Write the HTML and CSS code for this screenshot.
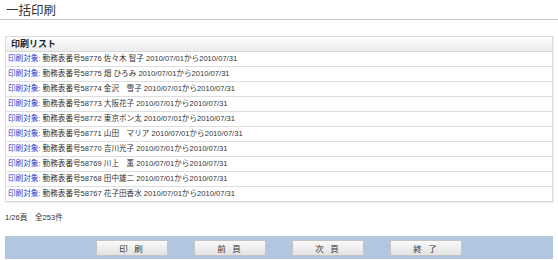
FILE: index.html
```html
<!DOCTYPE html>
<html lang="ja">
<head>
  <meta charset="utf-8">
  <title>一括印刷</title>
  <link rel="stylesheet" href="styles.css">
</head>
<body>
  <h1 class="title">一括印刷</h1>
  <div class="content">
    <div class="list">
      <div class="list-head">印刷リスト</div>
      <div class="row"><span class="label">印刷対象:</span> 勤務表番号58776 佐々木 智子 2010/07/01から2010/07/31</div>
      <div class="row"><span class="label">印刷対象:</span> 勤務表番号58775 畑 ひろみ 2010/07/01から2010/07/31</div>
      <div class="row"><span class="label">印刷対象:</span> 勤務表番号58774 金沢　雪子 2010/07/01から2010/07/31</div>
      <div class="row"><span class="label">印刷対象:</span> 勤務表番号58773 大阪花子 2010/07/01から2010/07/31</div>
      <div class="row"><span class="label">印刷対象:</span> 勤務表番号58772 東京ポン太 2010/07/01から2010/07/31</div>
      <div class="row"><span class="label">印刷対象:</span> 勤務表番号58771 山田　マリア 2010/07/01から2010/07/31</div>
      <div class="row"><span class="label">印刷対象:</span> 勤務表番号58770 吉川光子 2010/07/01から2010/07/31</div>
      <div class="row"><span class="label">印刷対象:</span> 勤務表番号58769 川上　薫 2010/07/01から2010/07/31</div>
      <div class="row"><span class="label">印刷対象:</span> 勤務表番号58768 田中雄二 2010/07/01から2010/07/31</div>
      <div class="row"><span class="label">印刷対象:</span> 勤務表番号58767 花子田香水 2010/07/01から2010/07/31</div>
    </div>
    <p class="pager">1/26頁　全253件</p>
    <div class="footer">
      <button class="btn">印 刷</button>
      <button class="btn">前 頁</button>
      <button class="btn">次 頁</button>
      <button class="btn">終 了</button>
    </div>
  </div>
</body>
</html>
```

FILE: styles.css
```css
html {
  font-family: "Liberation Sans", "Noto Sans CJK JP", sans-serif;
  color: #333;
}
body {
  margin: 0;
  background: #fff;
}
.title {
  margin: 0;
  padding: 3px 6px 0;
  height: 16px;
  font-size: 12.5px;
  font-weight: normal;
  line-height: 16px;
  color: #333;
  border-bottom: 1px solid #c8c8c8;
}
.content {
  padding: 16px 5px 0;
}
.list {
  border: 1px solid #dcdcdc;
  box-shadow: 1px 1px 1px #eee;
}
.list-head {
  height: 14px;
  line-height: 14px;
  padding-left: 5px;
  font-size: 9px;
  font-weight: bold;
  color: #222;
  background: linear-gradient(#fdfdfd, #ececec);
  border-bottom: 1px solid #d8d8d8;
}
.row {
  height: 14px;
  line-height: 14px;
  padding-left: 2px;
  font-size: 7.6px;
  color: #333;
  white-space: nowrap;
  border-bottom: 1px solid #dedede;
}
.row:last-child {
  border-bottom: none;
}
.label {
  color: #2a3cc8;
}
.pager {
  margin: 9px 0 0;
  height: 14px;
  line-height: 14px;
  font-size: 7.6px;
  color: #333;
}
.footer {
  margin-top: 11px;
  height: 23px;
  display: flex;
  justify-content: center;
  align-items: center;
  gap: 26px;
  background: #b3c6df;
}
.btn {
  width: 72px;
  height: 16px;
  padding: 0;
  font-family: inherit;
  font-size: 8.5px;
  letter-spacing: 2px;
  color: #333;
  background: linear-gradient(#fafafa, #e2e2e2);
  border: 1px solid #c4c4c4;
  border-radius: 1px;
}
```
